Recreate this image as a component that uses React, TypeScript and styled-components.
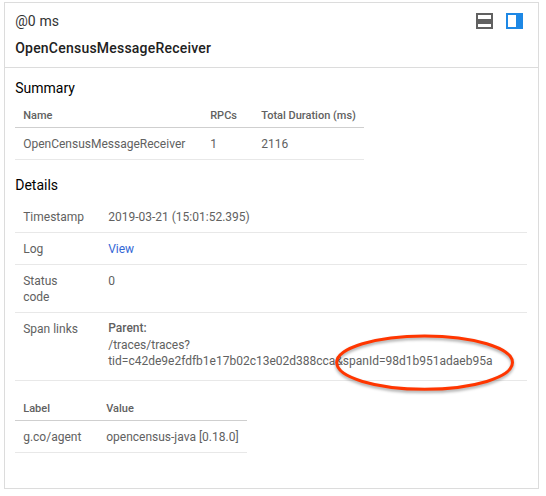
import React from "react";
import styled, { createGlobalStyle, css } from "styled-components";

const GlobalStyle = createGlobalStyle`
  * { box-sizing: border-box; }
  body { margin: 0; background: #fff; font-family: Roboto, "Liberation Sans", sans-serif; }
`;

const Page = styled.main`
  height: 496px;
  padding: 2px 7px 7px 4px;
`;

const Panel = styled.section`
  width: 535px;
  height: 487px;
  border: 1px solid #dcdcdc;
  color: #616161;
  font-size: 12px;
  line-height: 16px;
`;

const Header = styled.header`
  height: 65px;
  padding: 8px 15px 0 10.2px;
  border-bottom: 1px solid #dcdcdc;
  color: #212121;
`;

const HeaderTop = styled.div`
  display: flex;
  justify-content: space-between;
`;

const Offset = styled.div`
  font-size: 14px;
  line-height: 20px;
  letter-spacing: 0.1px;
  color: #333;
`;

const Title = styled.h1`
  margin: 7px 0 0;
  font-size: 14px;
  font-weight: 500;
  line-height: 20px;
  letter-spacing: 0.22px;
`;

const LayoutToggle = styled.div`
  display: flex;
  gap: 13px;
  padding-top: 2px;
`;

const LayoutIcon = styled.svg`
  display: block;
  width: 17px;
  height: 16px;
`;

const Body = styled.div`
  padding: 10px 11px 0 10px;
`;

const SectionTitle = styled.h2<{ $spaced?: boolean }>`
  margin: ${(p) => (p.$spaced ? "15px" : "0")} 0 0;
  padding-left: 0.2px;
  font-size: 14px;
  font-weight: 400;
  line-height: 20px;
  color: #000;
`;

const Table = styled.div<{ $columns: string; $width: number; $gap: number }>`
  display: grid;
  grid-template-columns: ${(p) => p.$columns};
  width: ${(p) => p.$width}px;
  margin-top: ${(p) => p.$gap}px;
`;

const HeadCell = styled.div`
  height: 25px;
  padding: 5px 0 0 8.2px;
  border-bottom: 1px solid #cfcfcf;
  font-size: 11px;
  font-weight: 500;
  white-space: nowrap;
`;

const Cell = styled.div`
  height: 32px;
  padding: 8px 0 0 8.2px;
  border-bottom: 1px solid #e8e8e8;
  white-space: nowrap;
`;

const DetailList = styled.div`
  margin-top: 6px;
  width: 512px;
`;

const DetailRow = styled.div<{ $tall?: boolean }>`
  display: grid;
  grid-template-columns: 48px 1fr;
  column-gap: 37px;
  padding: 8px 7.8px 7px 8.2px;
  border-bottom: 1px solid #e8e8e8;
  ${(p) => p.$tall && css`height: 68px;`}
`;

const DetailName = styled.div<{ $single?: boolean }>`
  white-space: ${(p) => (p.$single ? "nowrap" : "normal")};
`;

const Link = styled.a`
  color: #3367d6;
`;

const ParentLabel = styled.div`
  margin-top: -1px;
  font-weight: 500;
  line-height: 17px;
`;

const Highlighted = styled.span`
  position: relative;
`;

const HighlightRing = styled.svg`
  position: absolute;
  left: -11px;
  top: -29px;
  width: 188px;
  height: 66px;
  overflow: visible;
  pointer-events: none;
  filter: drop-shadow(0 2px 1.5px rgba(0, 0, 0, 0.35));
`;

export default function App() {
  return (
    <Page>
      <GlobalStyle />
      <Panel>
        <Header>
          <HeaderTop>
            <Offset>@0 ms</Offset>
            <LayoutToggle>
              <LayoutIcon viewBox="0 0 17 16" shapeRendering="crispEdges" aria-label="Stacked layout">
                <path fill="#616161" fillRule="evenodd" d="M0 0h17v16H0zM2 2v4h13V2zM2 11v3h13v-3z" />
              </LayoutIcon>
              <LayoutIcon viewBox="0 0 17 16" shapeRendering="crispEdges" aria-label="Side layout">
                <path fill="#1e88e5" fillRule="evenodd" d="M0 0h17v16H0zM2 2v12h8V2z" />
              </LayoutIcon>
            </LayoutToggle>
          </HeaderTop>
          <Title>OpenCensusMessageReceiver</Title>
        </Header>
        <Body>
          <SectionTitle>Summary</SectionTitle>
          <Table $columns="187px 51px 1fr" $width={349} $gap={5}>
            <HeadCell>Name</HeadCell>
            <HeadCell>RPCs</HeadCell>
            <HeadCell>Total Duration (ms)</HeadCell>
            <Cell>OpenCensusMessageReceiver</Cell>
            <Cell>1</Cell>
            <Cell>2116</Cell>
          </Table>
          <SectionTitle $spaced>Details</SectionTitle>
          <DetailList>
            <DetailRow>
              <DetailName $single>Timestamp</DetailName>
              <div>2019-03-21 (15:01:52.395)</div>
            </DetailRow>
            <DetailRow>
              <DetailName>Log</DetailName>
              <div><Link>View</Link></div>
            </DetailRow>
            <DetailRow>
              <DetailName>Status code</DetailName>
              <div>0</div>
            </DetailRow>
            <DetailRow $tall>
              <DetailName $single>Span links</DetailName>
              <div>
                <ParentLabel>Parent:</ParentLabel>
                <div>/traces/traces?</div>
                <div>
                  tid=c42de9e2fdfb1e17b02c13e02d388cca
                  <Highlighted>
                    &amp;spanId=98d1b951adaeb95a
                    <HighlightRing viewBox="0 0 188 66">
                      <ellipse cx="100.6" cy="37.6" rx="87.9" ry="26.7" fill="none" stroke="#ff3600" strokeWidth="3" />
                    </HighlightRing>
                  </Highlighted>
                </div>
              </div>
            </DetailRow>
          </DetailList>
          <Table $columns="83px 1fr" $width={232} $gap={15}>
            <HeadCell>Label</HeadCell>
            <HeadCell>Value</HeadCell>
            <Cell>g.co/agent</Cell>
            <Cell>opencensus-java [0.18.0]</Cell>
          </Table>
        </Body>
      </Panel>
    </Page>
  );
}
